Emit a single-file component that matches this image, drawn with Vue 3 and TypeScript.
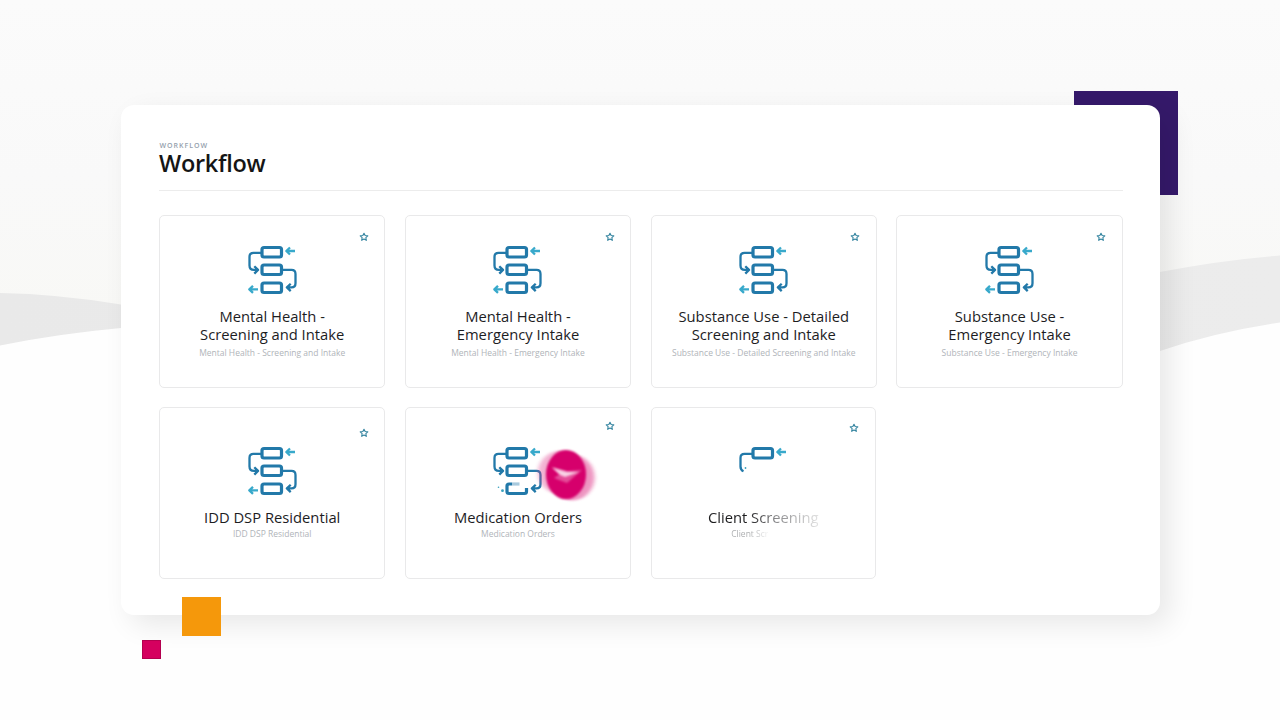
<script setup lang="ts">
type IconState = 'full' | 'partial' | 'start'

interface WorkflowCard {
  id: string
  title: string[]
  subtitle: string
  icon: IconState
}

const cards: WorkflowCard[] = [
  { id: 'mh-screening', title: ['Mental Health -', 'Screening and Intake'], subtitle: 'Mental Health - Screening and Intake', icon: 'full' },
  { id: 'mh-emergency', title: ['Mental Health -', 'Emergency Intake'], subtitle: 'Mental Health - Emergency Intake', icon: 'full' },
  { id: 'su-detailed', title: ['Substance Use - Detailed', 'Screening and Intake'], subtitle: 'Substance Use - Detailed Screening and Intake', icon: 'full' },
  { id: 'su-emergency', title: ['Substance Use -', 'Emergency Intake'], subtitle: 'Substance Use - Emergency Intake', icon: 'full' },
  { id: 'idd', title: ['IDD DSP Residential'], subtitle: 'IDD DSP Residential', icon: 'full' },
  { id: 'medication', title: ['Medication Orders'], subtitle: 'Medication Orders', icon: 'partial' },
  { id: 'client', title: ['Client Screening'], subtitle: 'Client Scr', icon: 'start' },
]
</script>

<template>
  <main class="stage">
    <svg class="backdrop" viewBox="0 0 1280 720" aria-hidden="true">
      <defs>
        <linearGradient id="sky" x1="0" y1="0" x2="0" y2="1">
          <stop offset="0" stop-color="#fbfbfb" />
          <stop offset="0.5" stop-color="#f9f9f9" />
          <stop offset="1" stop-color="#f8f8f5" />
        </linearGradient>
        <linearGradient id="hill" x1="0" y1="0" x2="1" y2="0">
          <stop offset="0" stop-color="#e9e9e9" />
          <stop offset="1" stop-color="#ececec" />
        </linearGradient>
      </defs>
      <rect width="1280" height="350" fill="url(#sky)" />
      <path d="M0 293Q58 294 121 304.500C460 355 800 320 1160 272Q1222 260 1280 255.500V720H0Z" fill="url(#hill)" />
      <path d="M0 345.500Q56 334 121 328C460 320 800 430 1160 351Q1215 332 1280 322.500V720H0Z" fill="#fefefe" />
    </svg>
    <span class="block violet"></span>

    <section class="panel">
      <header class="head">
        <span class="eyebrow">WORKFLOW</span>
        <h1>Workflow</h1>
      </header>
      <div class="grid">
        <article v-for="card in cards" :key="card.id" class="card" :class="[card.id, { single: card.title.length === 1 }]">
          <svg class="star" viewBox="0 0 10 10" aria-hidden="true">
            <path d="M5 1.200L6.150 3.550L8.800 3.900L6.850 5.700L7.350 8.350L5 7.100L2.650 8.350L3.150 5.700L1.200 3.900L3.850 3.550Z" />
          </svg>
          <svg class="flow" viewBox="0 0 50 50" aria-hidden="true">
            <g class="deep box">
              <rect x="15" y="2.500" width="19.500" height="9.500" rx="2" />
              <rect v-if="card.icon !== 'start'" x="15" y="20" width="19.500" height="9.500" rx="2" />
              <rect v-if="card.icon === 'full'" x="15" y="38" width="19.500" height="9.500" rx="2" />
            </g>
            <path class="cyan" d="M48 6H39.500M43 2.500L39.300 6L43 9.500" />
            <path v-if="card.icon !== 'start'" class="deep" d="M15 7.900H6.500Q2.500 7.900 2.500 11.900V20.500Q2.500 24.900 7 24.900H10M7.300 21.200L11 24.900L7.300 28.600M34.500 24.900H44.500Q48.500 24.900 48.500 28.900V38.300Q48.500 42.400 44.500 42.400H40.500M43.700 38.700L39.900 42.400L43.700 46.100" />
            <path v-if="card.icon === 'full'" class="cyan" d="M11 44.300H2.500M6 40.800L2.300 44.300L6 47.800" />
            <template v-if="card.icon === 'partial'">
              <path class="deep box" d="M20 38H17Q15 38 15 40V45.500Q15 47.500 17 47.500H32.500Q34.500 47.500 34.500 45.500V42" />
              <path class="deep box faded" d="M20 38H27.500" />
              <circle class="dot" cx="10.500" cy="44.700" r="1.400" />
              <circle class="dot" cx="6.500" cy="41.300" r="0.800" />
            </template>
            <template v-if="card.icon === 'start'">
              <path class="deep" d="M15 7.900H6.500Q2.500 7.900 2.500 11.900V20.500Q2.500 24 5.500 25.300" />
              <circle class="dot" cx="7.500" cy="22" r="0.900" />
            </template>
          </svg>
          <h2><span v-for="line in card.title" :key="line">{{ line }}</span></h2>
          <p>{{ card.subtitle }}</p>
          <svg v-if="card.id === 'medication'" class="pointer" viewBox="0 0 70 60" aria-hidden="true">
            <defs>
              <filter id="halo" x="-30%" y="-30%" width="160%" height="160%"><feGaussianBlur stdDeviation="2 1" /></filter>
              <filter id="core" x="-20%" y="-20%" width="140%" height="140%"><feGaussianBlur stdDeviation="1.300 0.900" /></filter>
            </defs>
            <ellipse cx="30" cy="27.500" rx="23" ry="22" fill="#e0408f" opacity="0.400" filter="url(#halo)" />
            <ellipse cx="41" cy="32.500" rx="22.500" ry="23" fill="#e0408f" opacity="0.550" filter="url(#halo)" />
            <ellipse cx="35" cy="29.500" rx="20" ry="24.500" fill="#d6006c" filter="url(#core)" />
            <path d="M21 22L36 26L51 25L44 31L36 38L28 35L23 33L29 29Z" fill="#ee7fb6" opacity="0.600" filter="url(#core)" />
            <path d="M21 22.500L36 27L48 27L34 32L29 30Z" fill="#fff" opacity="0.750" filter="url(#core)" />
          </svg>
        </article>
      </div>
    </section>

    <span class="block orange"></span>
    <span class="block pink"></span>
  </main>
</template>

<style>
body {
  margin: 0;
  overflow: hidden;
}
</style>

<style scoped>
.stage {
  position: relative;
  box-sizing: border-box;
  width: 1280px;
  height: 720px;
  padding: 105px 120px 105px 121px;
  overflow: hidden;
  background: #fefefe;
  font-family: 'Open Sans', 'Noto Sans', sans-serif;
}
.backdrop {
  position: absolute;
  inset: 0;
  width: 1280px;
  height: 720px;
}
.block {
  position: absolute;
}
.violet {
  left: 1074px;
  top: 91px;
  width: 104px;
  height: 104px;
  background: #35196a;
}
.orange {
  left: 182px;
  top: 597px;
  width: 39px;
  height: 39px;
  background: #f5980b;
}
.pink {
  left: 142px;
  top: 640px;
  width: 19.4px;
  height: 19.4px;
  box-sizing: border-box;
  border: 1px solid #b3004f;
  background: #d5005f;
}
.panel {
  position: relative;
  box-sizing: border-box;
  width: 1039px;
  height: 510px;
  padding: 35px 37px 0 38px;
  border-radius: 13px;
  background: #fff;
  box-shadow: 10px 10px 28px rgba(0, 0, 0, 0.09);
}
.head {
  display: flex;
  flex-direction: column;
  box-sizing: border-box;
  height: 51px;
  border-bottom: 1px solid #ececec;
}
.eyebrow {
  height: 11px;
  padding-left: 0.5px;
  font-size: 7px;
  font-weight: 600;
  line-height: 11px;
  letter-spacing: 0.98px;
  color: #95a1ad;
}
h1 {
  margin: 0;
  font-size: 23.5px;
  font-weight: 600;
  line-height: 24px;
  letter-spacing: -0.3px;
  color: #151515;
}
.grid {
  display: grid;
  grid-template-columns: repeat(4, 226.4px);
  grid-auto-rows: 172.5px;
  gap: 19px 19.4px;
  margin-top: 24.2px;
}
.card {
  position: relative;
  display: flex;
  flex-direction: column;
  align-items: center;
  box-sizing: border-box;
  padding-top: 28.5px;
  border: 1px solid #e9e9ea;
  border-radius: 5px;
  background: #fff;
}
.card.single {
  padding-top: 38px;
}
.card.client {
  margin-right: 1px;
}
.star {
  position: absolute;
  right: 15.6px;
  top: 16px;
  width: 10px;
  height: 10px;
}
.idd .star {
  top: 20.5px;
}
.medication .star {
  top: 13.5px;
}
.client .star {
  top: 15.5px;
}
.star path {
  fill: none;
  stroke: #3585a0;
  stroke-width: 1.1;
  stroke-linejoin: round;
}
.flow {
  width: 50px;
  height: 50px;
  margin-left: -1px;
}
.flow path,
.flow rect {
  fill: none;
  stroke-width: 2.3;
  stroke-linejoin: round;
}
.flow .deep {
  stroke: #2279a9;
}
.flow .box rect,
.flow path.box {
  stroke-width: 3.2;
}
.flow .cyan {
  stroke: #38a9cb;
}
.flow .faded {
  opacity: 0.4;
}
.flow .dot {
  fill: #38a0bd;
}
h2 {
  display: flex;
  flex-direction: column;
  align-items: center;
  margin: 13px 0 0;
  font-size: 14.75px;
  font-weight: 400;
  line-height: 17.9px;
  white-space: nowrap;
  color: #1d1d1f;
}
p {
  margin: 3.3px 0 0;
  font-size: 8.5px;
  line-height: 12px;
  white-space: nowrap;
  color: #b0b4b9;
}
.single p {
  margin-top: 1.8px;
}
.client h2 {
  padding-bottom: 3px;
  margin-bottom: -3px;
  background: linear-gradient(90deg, #1d1d1f 35%, #8c8c8e 62%, #e4e4e4 100%);
  background-clip: text;
  color: transparent;
}
.client p {
  padding-right: 27px;
  background: linear-gradient(90deg, #a7a9ab 30%, #f4f4f4 58%);
  background-clip: text;
  color: transparent;
}
.pointer {
  position: absolute;
  left: 125px;
  top: 37px;
  width: 70px;
  height: 60px;
}
</style>
